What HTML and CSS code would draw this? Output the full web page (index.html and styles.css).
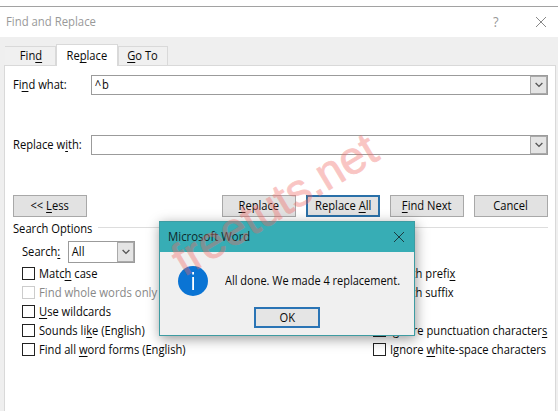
FILE: index.html
```
<!DOCTYPE html>
<html lang="en">
<head>
<meta charset="utf-8">
<title>Find and Replace</title>
<link rel="stylesheet" href="styles.css">
</head>
<body>
<main class="window">
  <header class="titlebar">
    <h1 class="title"><span>Find and Replace</span></h1>
    <span class="help">?</span>
    <svg class="close" viewBox="0 0 10 10"><path d="M0 0L10 10M10 0L0 10"/></svg>
  </header>
  <nav class="tabs">
    <div class="tab tab-find"><span>Fin<u>d</u></span></div>
    <div class="tab active"><span>Re<u>p</u>lace</span></div>
    <div class="tab tab-goto"><span><u>G</u>o To</span></div>
  </nav>
  <section class="panel">
    <div class="field">
      <label><span>Fi<u>n</u>d what:</span></label>
      <div class="combo"><span class="value code">^b</span><i class="arrow"><svg viewBox="0 0 9 6"><path d="M.7 .8L4.5 4.6L8.3 .8"/></svg></i></div>
    </div>
    <div class="field second">
      <label><span>Replace w<u>i</u>th:</span></label>
      <div class="combo"><i class="arrow"><svg viewBox="0 0 9 6"><path d="M.7 .8L4.5 4.6L8.3 .8"/></svg></i></div>
    </div>
    <div class="buttons">
      <div class="btn less"><span>&lt;&lt; <u>L</u>ess</span></div>
      <div class="btn"><span><u>R</u>eplace</span></div>
      <div class="btn primary"><span>Replace <u>A</u>ll</span></div>
      <div class="btn"><span><u>F</u>ind Next</span></div>
      <div class="btn"><span>Cancel</span></div>
    </div>
    <div class="legend"><span>Search Options</span></div>
    <div class="search"><span>Search<u>:</u></span>
      <div class="select"><span class="value">All</span><i class="arrow"><svg viewBox="0 0 9 6"><path d="M.7 .8L4.5 4.6L8.3 .8"/></svg></i></div>
    </div>
    <div class="options">
      <div class="column">
        <div class="check"><i></i><span>Matc<u>h</u> case</span></div>
        <div class="check disabled"><i></i><span>Find whole words only</span></div>
        <div class="check"><i></i><span><u>U</u>se wildcards</span></div>
        <div class="check"><i></i><span>Sounds li<u>k</u>e (English)</span></div>
        <div class="check"><i></i><span>Find all <u>w</u>ord forms (English)</span></div>
      </div>
      <div class="column">
        <div class="check"><i></i><span>Match prefi<u>x</u></span></div>
        <div class="check"><i></i><span>Match suffix</span></div>
        <div class="check gap"></div>
        <div class="check"><i></i><span>Ignore punctuation character<u>s</u></span></div>
        <div class="check"><i></i><span>Ignore <u>w</u>hite-space characters</span></div>
      </div>
    </div>
  </section>
</main>
<div class="dialog">
  <div class="dialog-title"><span>Microsoft Word</span><svg viewBox="0 0 10 10"><path d="M0 0L10 10M10 0L0 10"/></svg></div>
  <div class="message">
    <svg class="info" viewBox="0 0 30 30"><circle cx="15" cy="15" r="15"/><path d="M14.2 6h1.8v2.5h-1.8zM14.2 11h1.8V24h-1.8z"/></svg>
    <span>All done. We made 4 replacement.</span>
  </div>
  <div class="ok"><span>OK</span></div>
</div>
<div class="watermark">freetuts.net</div>
</body>
</html>
```
FILE: styles.css
```
* { box-sizing: border-box; }
body { margin: 0; width: 558px; height: 411px; overflow: hidden; position: relative; background: #efefef; color: #080808; font: 12px/16px "Open Sans", "Noto Sans", sans-serif; white-space: nowrap; }
u { text-decoration-thickness: 1px; text-underline-offset: 2px; text-decoration-skip-ink: none; }
i { display: block; }
span { display: inline-block; transform: scaleX(.93); transform-origin: 0 50%; }
.btn span, .tab span, .ok span { transform-origin: 50% 50%; }
svg { fill: none; stroke: #555; overflow: visible; }
.window { height: 411px; display: flex; flex-direction: column; }
.titlebar { height: 37px; flex: none; background: linear-gradient(#fff 6px, #a2a2a2 6px, #a2a2a2 7px, #fff 7px); display: flex; align-items: center; padding: 6px 12px 0 6px; color: #999; }
.title { font: inherit; margin: 0; flex: 1; }
.title span { transform: scaleX(.945); }
.help { font-size: 14px; margin-right: 37px; }
.close { width: 10px; height: 10px; stroke: #888; }
.tabs { height: 28px; flex: none; display: flex; align-items: flex-end; padding-left: 5px; }
.tab { height: 19px; width: 51px; display: flex; align-items: center; justify-content: center; border: 1px solid #d9d9d9; border-bottom: 0; background: #f0f0f0; }
.tab-find { padding-left: 2px; border-left: 0; }
.tab.active { width: 62px; height: 22px; margin-bottom: -1px; background: #fff; z-index: 1; }
.tab-goto { width: 50px; padding-right: 2px; }
.panel { flex: 1; width: 552px; margin-left: 4px; background: #fff; border: 1px solid #d9d9d9; border-bottom: 0; padding: 9px 7px 0 8px; }
.field { height: 20px; display: flex; align-items: center; }
.field label { width: 78px; }
.second { margin-top: 40px; }
.combo, .select { display: flex; height: 20px; border: 1px solid #9b9b9b; width: 458px; background: #fff; }
.value { flex: 1; padding-left: 3px; line-height: 18px; }
.code { letter-spacing: 1px; }
.arrow { margin-left: auto; width: 17px; background: #e4e4e4; border: 1px solid #aaa; display: flex; align-items: center; justify-content: center; }
.arrow svg { width: 8px; height: 6px; stroke-width: 1.5; }
.buttons { display: flex; margin-top: 40px; gap: 10px; }
.btn { width: 74px; height: 22px; border: 1px solid #a8a8a8; background: #e2e2e2; display: flex; align-items: center; justify-content: center; }
.less { margin-right: 125px; }
.primary { border: 2px solid #2a70a8; }
.legend { display: flex; align-items: center; height: 16px; margin-top: 4px; }
.legend::after { content: ""; flex: 1; height: 1px; background: #ddd; margin-top: -3px; }
.search { display: flex; align-items: center; margin: 4px 0 0 9px; height: 22px; }
.search > span { width: 46px; }
.select { width: 67px; height: 22px; }
.select .value { line-height: 20px; }
.options { display: flex; margin: 1px 0 0 9px; }
.column { width: 351px; flex: none; }
.column + .column { width: 180px; }
.check { height: 19px; display: flex; align-items: center; gap: 4px; }
.check i { flex: none; width: 13px; height: 13px; border: 1px solid #222; background: #fff; }
.disabled { color: #888; }
.disabled span { transform: scaleX(.945); }
.disabled i { border-color: #ccc; }
.dialog { position: absolute; left: 159px; top: 221px; width: 256px; height: 115px; border: 1px solid #3e9ca2; background: #f0f0f0; box-shadow: 1px 3px 12px #0006; }
.dialog-title { background: #37adb5; height: 30px; display: flex; align-items: center; justify-content: space-between; padding: 0 10px 0 8px; color: #10282a; }
.dialog-title span { transform: scaleX(.95); }
.dialog-title svg { width: 10px; height: 10px; stroke: #1b3c40; }
.message { display: flex; align-items: center; margin: 14px 0 0 18px; height: 30px; gap: 17px; }
.message span { transform: scaleX(.915); }
.info { width: 30px; height: 30px; stroke: none; fill: #0a74d4; flex: none; }
.info path { fill: #fff; }
.ok { width: 66px; height: 21px; margin: 11px 0 0 94px; border: 2px solid #2a74b5; background: #e5e5e5; display: flex; align-items: center; justify-content: center; }
.watermark { position: absolute; left: 184px; top: 239px; font: 46px/45px "Liberation Sans", sans-serif; color: #f06864; -webkit-text-stroke: .8px #f06864; opacity: .38; transform-origin: 0 38px; transform: rotate(-31deg); }
```
